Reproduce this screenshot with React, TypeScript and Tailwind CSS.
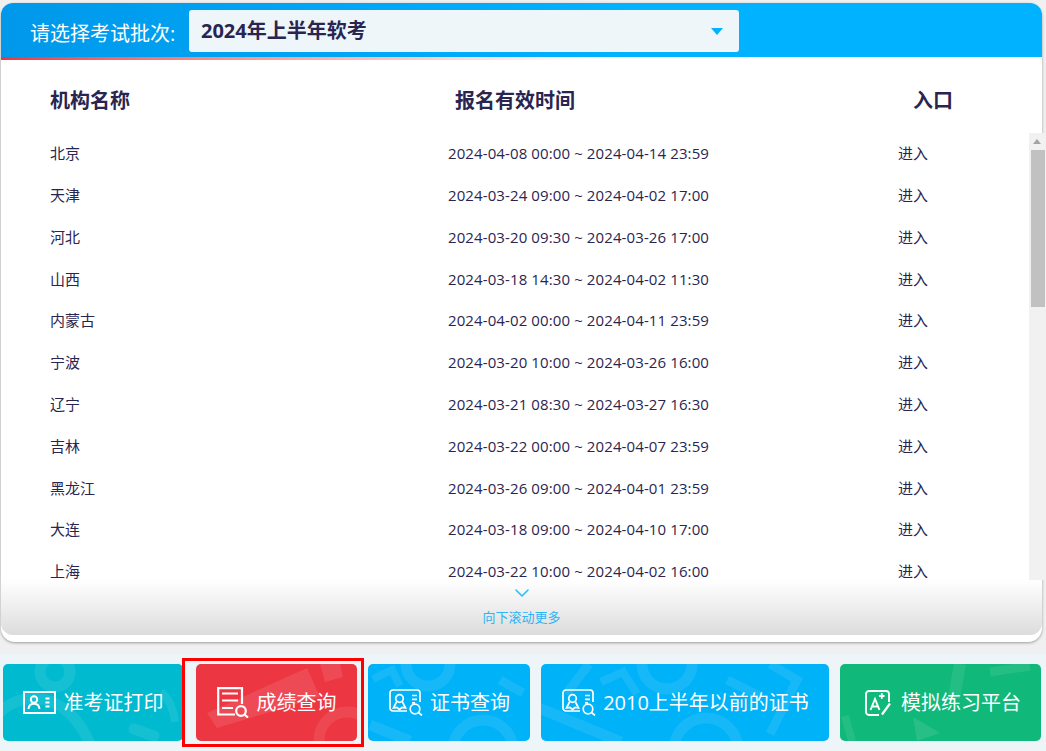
import React from 'react';
import { ChevronDown } from 'lucide-react';

const ROWS = [
  ['北京', '2024-04-08 00:00 ~ 2024-04-14 23:59'],
  ['天津', '2024-03-24 09:00 ~ 2024-04-02 17:00'],
  ['河北', '2024-03-20 09:30 ~ 2024-03-26 17:00'],
  ['山西', '2024-03-18 14:30 ~ 2024-04-02 11:30'],
  ['内蒙古', '2024-04-02 00:00 ~ 2024-04-11 23:59'],
  ['宁波', '2024-03-20 10:00 ~ 2024-03-26 16:00'],
  ['辽宁', '2024-03-21 08:30 ~ 2024-03-27 16:30'],
  ['吉林', '2024-03-22 00:00 ~ 2024-04-07 23:59'],
  ['黑龙江', '2024-03-26 09:00 ~ 2024-04-01 23:59'],
  ['大连', '2024-03-18 09:00 ~ 2024-04-10 17:00'],
  ['上海', '2024-03-22 10:00 ~ 2024-04-02 16:00'],
];

function IdIcon() {
  return (
    <svg width="33" height="23" viewBox="0 0 33 23" fill="none" stroke="white" strokeWidth="2">
      <rect x="1" y="1" width="31" height="21" />
      <circle cx="11" cy="8.500" r="3.200" />
      <path d="M5.500 18c.3-3.500 2.500-5.200 5.500-5.200s5.200 1.700 5.500 5.200" />
      <path d="M22.500 7.500h4M22.500 11.500h4M22.500 15.500h4" />
    </svg>
  );
}

function ScoreIcon() {
  return (
    <svg width="32" height="31" viewBox="0 0 32 31" fill="none" stroke="white" strokeWidth="2.200">
      <path d="M18 27.500H1.200V1.200H25V17" />
      <path d="M5 6.500h16M5 13.500h16M5 21h11" />
      <circle cx="24" cy="24" r="4.800" />
      <path d="M27.500 27.500L31 30.500" />
    </svg>
  );
}

function CertIcon() {
  return (
    <svg width="34" height="27" viewBox="0 0 34 27" fill="none" stroke="white" strokeWidth="1.700">
      <path d="M18 22H4a3 3 0 0 1-3-3V4a3 3 0 0 1 3-3h24a3 3 0 0 1 3 3v9" />
      <circle cx="10.500" cy="9.500" r="3.800" />
      <path d="M7.500 13L4.500 19l3.500-.5 2.500 2 2.500-2 3.500.5-3-6" />
      <path d="M23 6.500h5M23 10.300h5M23 13.800h3" />
      <circle cx="26" cy="20" r="4.800" />
      <path d="M29.500 23.500L33 26.500" />
    </svg>
  );
}

function GradeIcon() {
  return (
    <svg width="26" height="26" viewBox="0 0 26 26" fill="none" stroke="white" strokeWidth="1.900">
      <path d="M14 25H4a3 3 0 0 1-3-3V4a3 3 0 0 1 3-3h17a3 3 0 0 1 3 3v8" />
      <path d="M5.500 20L10 9l4.500 11M7 16.500h6" />
      <path d="M14 6h5.500M16.800 3.200v5.600" />
      <path d="M17 24.500L25 13.500" strokeWidth="2.200" />
    </svg>
  );
}

// svg has no viewBox on purpose, so the coordinates are the button's own pixels
function Decor({ kind }: { kind: string }) {
  return (
    <svg className="absolute inset-0 w-full h-full" fill="none" stroke="white" strokeOpacity="0.085" strokeWidth="11">
      {kind === 'teal' && (
        <>
          <circle cx="52" cy="8" r="15" />
          <path d="M-5 50C15 28 62 22 88 82" />
          <path d="M131 65l20 7" strokeLinecap="round" />
          <path d="M158 28c8 6 12 16 14 30" strokeWidth="8" />
        </>
      )}
      {kind === 'red' && (
        <>
          <path d="M11 49L111 4L124 33L21 64Z" fill="white" fillOpacity="0.1" stroke="none" />
          <path d="M124 0H144L147 13L129 18Z" fill="white" fillOpacity="0.1" stroke="none" />
          <circle cx="151" cy="76" r="28" />
        </>
      )}
      {kind === 'cert' && (
        <>
          <path d="M2 61l40 16" />
          <path d="M5 15L24 6L32 22" strokeWidth="8" />
          <circle cx="60" cy="0" r="22" />
          <circle cx="115" cy="86" r="30" />
          <path d="M132 16l23 13" strokeWidth="9" />
        </>
      )}
      {kind === 'wide' && (
        <>
          <path d="M-2 44L80 78" />
          <path d="M48 0L25 30" strokeWidth="9" />
          <path d="M60 18L82 8L96 30" strokeWidth="8" />
          <circle cx="126" cy="0" r="25" />
          <circle cx="165" cy="86" r="32" />
          <path d="M186 16l33 16" strokeWidth="9" />
          <path d="M229 0L256 16L229 70" strokeWidth="9" />
        </>
      )}
      {kind === 'green' && (
        <>
          <path d="M120 0L114 34" strokeWidth="12" />
          <path d="M150 8L190 2" strokeWidth="9" />
          <path d="M73 53L100 69L77 77Z" fill="white" fillOpacity="0.1" stroke="none" />
          <path d="M5 52L12 77" strokeWidth="8" />
        </>
      )}
    </svg>
  );
}

function NavButton({ bg, kind, icon, label, className }: { bg: string; kind: string; icon: React.ReactNode; label: string; className: string }) {
  return (
    <div className={`relative shrink-0 overflow-hidden rounded-[5px] h-[77px] flex items-center justify-center text-white text-[20px] ${bg} ${className}`}>
      <Decor kind={kind} />
      <span className="relative shrink-0 flex">{icon}</span>
      <span className="relative whitespace-nowrap">{label}</span>
    </div>
  );
}

export default function App() {
  return (
    <div className="relative w-[1046px] h-[751px] overflow-hidden bg-[#eef5f8] text-[#2a2550] font-['Open_Sans','Noto_Sans','Noto_Sans_CJK_SC',sans-serif]">
      <div className="h-[654px] bg-[#f0f0f0] pt-[3px] pl-px">
        <div className="w-[1041px] h-[639px] bg-white rounded-[14px] shadow-[0_1px_3px_rgba(0,0,0,0.35)] pb-[7px]">
          <div className="h-[632px] flex flex-col rounded-[12px] overflow-hidden">
            <div className="shrink-0 h-[54px] pt-[7px] pl-[29px] flex items-start bg-gradient-to-r from-[#0098ea] to-[#00b2ff] to-60%">
              <span className="text-white text-[20px] leading-[48px] w-[159px] whitespace-nowrap">请选择考试批次:</span>
              <div className="w-[550px] h-[42px] rounded-[3px] bg-[#eef6f9] pl-[12px] pr-[16px] flex items-center justify-between">
                <span className="font-bold text-[20px] leading-[46px] text-[#2a2550]">2024年上半年软考</span>
                <span className="w-0 h-0 border-x-[6px] border-x-transparent border-t-[7px] border-t-[#00b2ff]" />
              </div>
            </div>
            <div className="shrink-0 h-[3px] bg-gradient-to-r from-[#ec3642] to-white to-[57%]" />
            <div className="shrink-0 h-[73px] flex items-center font-bold text-[20px] pt-[8px]">
              <span className="w-[454px] pl-[49px]">机构名称</span>
              <span className="w-[458px]">报名有效时间</span>
              <span>入口</span>
            </div>
            <div className="relative flex-1 min-h-0 overflow-hidden">
              <div className="text-[15px] pl-[49px] -mt-[0.4px]">
                {ROWS.map(([name, time]) => (
                  <div key={name} className="h-[41.8px] flex items-center">
                    <span className="w-[398px]">{name}</span>
                    <span className="w-[450px] whitespace-nowrap tracking-[0.11px]">{time}</span>
                    <span>进入</span>
                  </div>
                ))}
              </div>
              <div className="absolute left-0 right-0 bottom-0 h-[55px] bg-gradient-to-b from-white/0 to-[#dcdcdc] flex flex-col items-center text-[#2db4f5] text-[13px]">
                <ChevronDown size={24} strokeWidth={1.6} className="mt-[1px] text-[#2dbcfa]" />
                <span className="mt-[3px]">向下滚动更多</span>
              </div>
            </div>
          </div>
        </div>
      </div>
      {/* page scrollbar sits over the panel's right edge */}
      <div className="absolute left-[1029px] top-[133px] w-[17px] h-[447px] bg-[#f1f1f1] flex flex-col items-start">
        <span className="ml-[4px] mt-[6px] w-0 h-0 border-x-[4px] border-x-transparent border-b-[5px] border-b-[#a3a3a3]" />
        <span className="ml-[2px] mt-[6px] w-[14px] h-[157px] bg-[#c1c1c1]" />
      </div>
      <div className="flex items-start pt-[10px] pl-[3px]">
        <NavButton bg="bg-[#00bacf]" kind="teal" icon={<IdIcon />} label="准考证打印" className="w-[180px] mr-[13px] gap-[8px]" />
        <div className="relative shrink-0">
          <NavButton bg="bg-[#ec3642]" kind="red" icon={<ScoreIcon />} label="成绩查询" className="w-[161px] mr-[11px] gap-[8px]" />
          <div className="absolute -left-[14px] -top-[6px] w-[182px] h-[89px] border-[3px] border-[#ff0000]" />
        </div>
        <NavButton bg="bg-[#00b2f8]" kind="cert" icon={<CertIcon />} label="证书查询" className="w-[162px] mr-[11px] gap-[7px] pl-px" />
        <NavButton bg="bg-[#00b2f8]" kind="wide" icon={<CertIcon />} label="2010上半年以前的证书" className="w-[288px] mr-[11px] gap-[7px] pl-px" />
        <NavButton bg="bg-[#10b87a]" kind="green" icon={<GradeIcon />} label="模拟练习平台" className="w-[201px] pl-[5px] gap-[10px]" />
      </div>
    </div>
  );
}
